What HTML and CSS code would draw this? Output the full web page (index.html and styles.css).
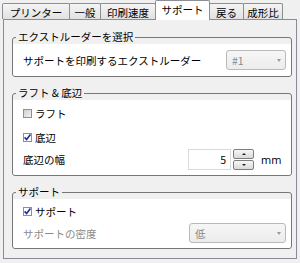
FILE: index.html
```html
<!DOCTYPE html>
<html lang="ja">

<head>
    <meta charset="UTF-8">
    <meta name="viewport" content="width=device-width, initial-scale=1.0">
    <title>サポート設定</title>
    <link rel="stylesheet" href="styles.css">
</head>

<body>
    <div class="window">
        <div class="tabs">
            <div class="tab">プリンター</div>
            <div class="tab">一般</div>
            <div class="tab">印刷速度</div>
            <div class="tab active">サポート</div>
            <div class="tab">戻る</div>
            <div class="tab">成形比</div>
        </div>

        <div class="panel">
            <fieldset class="group">
                <legend>エクストルーダーを選択</legend>
                <div class="group-body extruder-body">
                    <div class="field-row">
                        <span>サポートを印刷するエクストルーダー</span>
                        <div class="combo combo-small disabled">
                            <span>#1</span>
                            <span class="arrow"></span>
                        </div>
                    </div>
                </div>
            </fieldset>

            <fieldset class="group">
                <legend>ラフト &amp; 底辺</legend>
                <div class="group-body raft-body">
                    <label class="check-row">
                        <span class="check"></span>
                        <span>ラフト</span>
                    </label>
                    <label class="check-row">
                        <span class="check checked">
                            <svg width="9" height="9" viewBox="0 0 9 9">
                                <path d="M1.6 4.4 L3.6 6.6 L7.4 1.6" fill="none" stroke="#1b2f9c" stroke-width="1.6" />
                            </svg>
                        </span>
                        <span>底辺</span>
                    </label>
                    <div class="field-row">
                        <span>底辺の幅</span>
                        <div class="spin-wrap">
                            <div class="spin-input">5</div>
                            <div class="spin-buttons">
                                <div class="spin-btn"><span class="tri-up"></span></div>
                                <div class="spin-btn"><span class="tri-down"></span></div>
                            </div>
                            <span class="unit">mm</span>
                        </div>
                    </div>
                </div>
            </fieldset>

            <fieldset class="group">
                <legend>サポート</legend>
                <div class="group-body support-body">
                    <label class="check-row">
                        <span class="check checked">
                            <svg width="9" height="9" viewBox="0 0 9 9">
                                <path d="M1.6 4.4 L3.6 6.6 L7.4 1.6" fill="none" stroke="#1b2f9c" stroke-width="1.6" />
                            </svg>
                        </span>
                        <span>サポート</span>
                    </label>
                    <div class="field-row">
                        <span class="muted">サポートの密度</span>
                        <div class="combo combo-wide disabled">
                            <span>低</span>
                            <span class="arrow"></span>
                        </div>
                    </div>
                </div>
            </fieldset>
        </div>
    </div>
</body>

</html>
```

FILE: styles.css
```css
body {
    margin: 0;
    background: #f0f0f0;
    font-family: "Noto Sans CJK JP", "Noto Sans", sans-serif;
    font-size: 10.5px;
    color: #000;
}

.window {
    padding: 0 3px;
}

/* tab strip */
.tabs {
    display: flex;
    align-items: flex-end;
    height: 19px;
    margin-left: -1px;
}

.tab {
    height: 16px;
    line-height: 17px;
    box-sizing: border-box;
    border: 1px solid #8c8e94;
    border-bottom: none;
    border-radius: 2px 2px 0 0;
    background: linear-gradient(#f5f5f5, #e1e1e1);
    text-align: center;
    margin-left: -1px;
}

.tab:first-child {
    margin-left: 0;
}

.tab:nth-child(1) { width: 68px; }
.tab:nth-child(2) { width: 32px; }
.tab:nth-child(3) { width: 56px; }
.tab:nth-child(4) { width: 55px; }
.tab:nth-child(5) { width: 35px; }
.tab:nth-child(6) { width: 40px; }

.tab.active {
    position: relative;
    z-index: 1;
    height: 20px;
    line-height: 18px;
    margin-bottom: -1px;
    background: #fff;
}

/* page area */
.panel {
    border: 1px solid #898c95;
    background: #f0f0f0;
    padding: 10px 4px 9px 8px;
    display: flex;
    flex-direction: column;
    gap: 9px;
}

.group {
    margin: 0;
    padding: 0;
    min-width: 0;
    border: 1px solid #767676;
    border-radius: 3px;
}

.group legend {
    padding: 0 2px;
    margin-left: 3px;
    line-height: 14px;
    height: 14px;
}

.group-body {
    background: #fff;
    border-radius: 0 0 3px 3px;
    padding: 0 5px 5px 10px;
}

.extruder-body {
    padding-top: 6px;
    padding-bottom: 6px;
}

.raft-body {
    padding-top: 1px;
}

.support-body {
    padding-top: 0;
}

.field-row {
    display: flex;
    align-items: center;
    justify-content: space-between;
    height: 20px;
}

.raft-body .field-row {
    height: 21px;
}

.check-row {
    display: flex;
    align-items: center;
    gap: 3px;
    height: 24px;
}

.check {
    width: 9px;
    height: 9px;
    box-sizing: border-box;
    border: 1px solid #8e8f8f;
    background: linear-gradient(135deg, #cfcfcf, #f4f4f4);
    display: flex;
}

.check.checked {
    background: #fff;
}

.check svg {
    margin: -1px;
}

.muted {
    color: #8a8a8a;
}

/* combo boxes */
.combo {
    box-sizing: border-box;
    height: 20px;
    border: 1px solid #b9b9b9;
    border-radius: 3px;
    background: linear-gradient(#f6f6f6, #ececec);
    display: flex;
    align-items: center;
    justify-content: space-between;
    padding: 0 4px 0 5px;
}

.combo.disabled {
    color: #8a8a8a;
}

.combo-small {
    width: 60px;
}

.combo-wide {
    width: 97px;
}

.arrow {
    width: 0;
    height: 0;
    border-left: 2.5px solid transparent;
    border-right: 2.5px solid transparent;
    border-top: 3px solid #9a9a9a;
}

/* spin box */
.spin-wrap {
    display: flex;
    align-items: center;
}

.spin-input {
    box-sizing: border-box;
    width: 43px;
    height: 21px;
    line-height: 19px;
    border: 1px solid #dadada;
    background: #fff;
    text-align: right;
    padding-right: 4px;
}

.spin-buttons {
    display: flex;
    flex-direction: column;
    gap: 1px;
    margin-left: 2px;
}

.spin-btn {
    box-sizing: border-box;
    width: 21px;
    height: 10px;
    border: 1px solid #7d7d7d;
    border-radius: 2px;
    background: linear-gradient(#f7f7f7, #d9d9d9);
    display: flex;
    align-items: center;
    justify-content: center;
}

.tri-up {
    border-left: 2px solid transparent;
    border-right: 2px solid transparent;
    border-bottom: 2px solid #222;
}

.tri-down {
    border-left: 2px solid transparent;
    border-right: 2px solid transparent;
    border-top: 2px solid #222;
}

.unit {
    font-family: "Open Sans", "DejaVu Sans", sans-serif;
    font-size: 11px;
    width: 25px;
    margin-left: 7px;
}
```
